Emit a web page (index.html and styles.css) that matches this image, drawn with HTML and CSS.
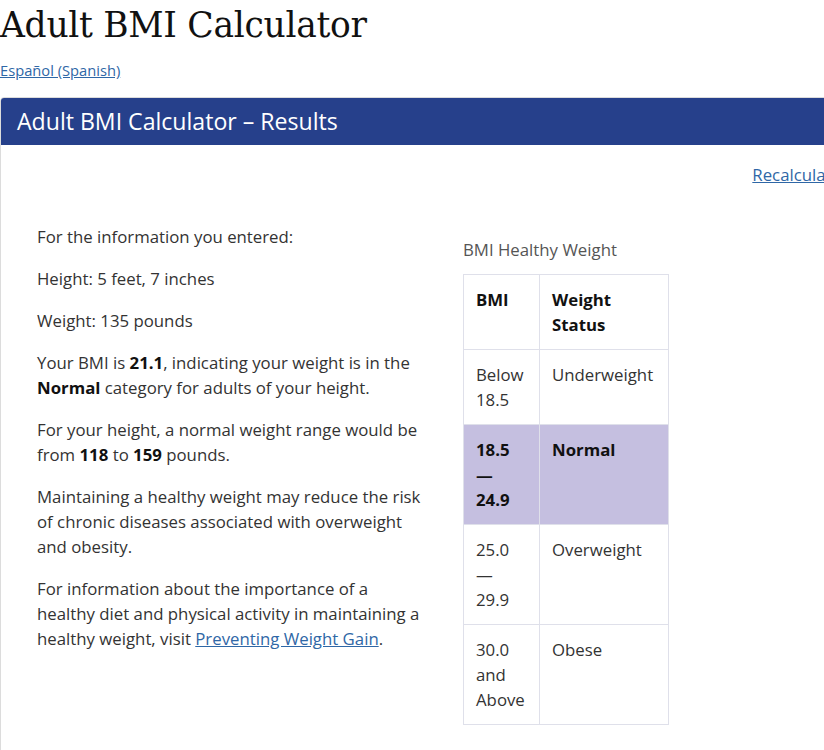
FILE: index.html
```html
<!DOCTYPE html>
<html lang="en">
<head>
<meta charset="utf-8">
<title>Adult BMI Calculator</title>
<link rel="stylesheet" href="styles.css">
</head>
<body>
<h1 class="page-title">Adult BMI Calculator</h1>
<p class="lang"><a href="#">Español (Spanish)</a></p>
<section class="panel">
  <h2 class="panel-header">Adult BMI Calculator – Results</h2>
  <div class="panel-body">
    <div class="recalc-row"><a href="#">Recalculate</a></div>
    <div class="results">
      <div class="info">
        <p>For the information you entered:</p>
        <p>Height: 5 feet, 7 inches</p>
        <p>Weight: 135 pounds</p>
        <p>Your BMI is <strong>21.1</strong>, indicating your weight is in the <strong>Normal</strong> category for adults of your height.</p>
        <p>For your height, a normal weight range would be from <strong>118</strong> to <strong>159</strong> pounds.</p>
        <p>Maintaining a healthy weight may reduce the risk of chronic diseases associated with overweight and obesity.</p>
        <p>For information about the importance of a healthy diet and physical activity in maintaining a healthy weight, visit <a href="#">Preventing Weight Gain</a>.</p>
      </div>
      <div class="table-wrap">
        <p class="caption">BMI Healthy Weight</p>
        <table class="bmi-table">
          <colgroup><col class="c1"><col class="c2"></colgroup>
          <thead>
            <tr><th>BMI</th><th>Weight<br>Status</th></tr>
          </thead>
          <tbody>
            <tr><td>Below<br>18.5</td><td>Underweight</td></tr>
            <tr class="current"><td>18.5<br>—<br>24.9</td><td>Normal</td></tr>
            <tr><td>25.0<br>—<br>29.9</td><td>Overweight</td></tr>
            <tr><td>30.0<br>and<br>Above</td><td>Obese</td></tr>
          </tbody>
        </table>
      </div>
    </div>
  </div>
</section>
</body>
</html>
```

FILE: styles.css
```css
html {
  overflow: hidden;
}
body {
  margin: 0;
  font-family: "Open Sans", "Liberation Sans", sans-serif;
  font-size: 16.8px;
  line-height: 25px;
  color: #333;
  background: #fff;
  width: 860px;
}
a {
  color: #2f67a6;
  text-decoration: underline;
}
.page-title {
  margin: 0;
  padding-top: 3px;
  font-family: "DejaVu Serif", "Liberation Serif", serif;
  font-weight: normal;
  font-size: 34.5px;
  line-height: 44px;
  color: #111;
  letter-spacing: -0.3px;
}
.lang {
  margin: 12px 0 0;
  font-size: 14.7px;
  line-height: 22px;
}
.panel {
  margin-top: 16px;
  border: 1px solid #dcdcdc;
  border-radius: 4px 4px 0 0;
  min-height: 700px;
}
.panel-header {
  margin: 0;
  background: #26408b;
  color: #fff;
  font-weight: normal;
  font-size: 23.1px;
  height: 47px;
  line-height: 47px;
  padding-left: 16px;
  border-radius: 3px 3px 0 0;
}
.panel-body {
  padding: 17px 18px 20px 36px;
}
.recalc-row {
  display: flex;
  justify-content: flex-end;
}
.results {
  margin-top: 37px;
  display: grid;
  grid-template-columns: 390px auto;
  column-gap: 36px;
  align-items: start;
}
.info p {
  margin: 0 0 17px;
}
.info strong {
  font-weight: 700;
  color: #111;
}
.table-wrap {
  padding-top: 13px;
}
.caption {
  margin: 0 0 12px;
  color: #555;
}
.bmi-table {
  border-collapse: collapse;
  table-layout: fixed;
  width: 206px;
}
.bmi-table col.c1 {
  width: 76px;
}
.bmi-table th,
.bmi-table td {
  border: 1px solid #dfe0ea;
  padding: 12px;
  text-align: left;
  vertical-align: top;
}
.bmi-table th {
  font-weight: 700;
  color: #111;
}
.bmi-table tr.current td {
  background: #c5bfe0;
  font-weight: 700;
  color: #111;
}
```
